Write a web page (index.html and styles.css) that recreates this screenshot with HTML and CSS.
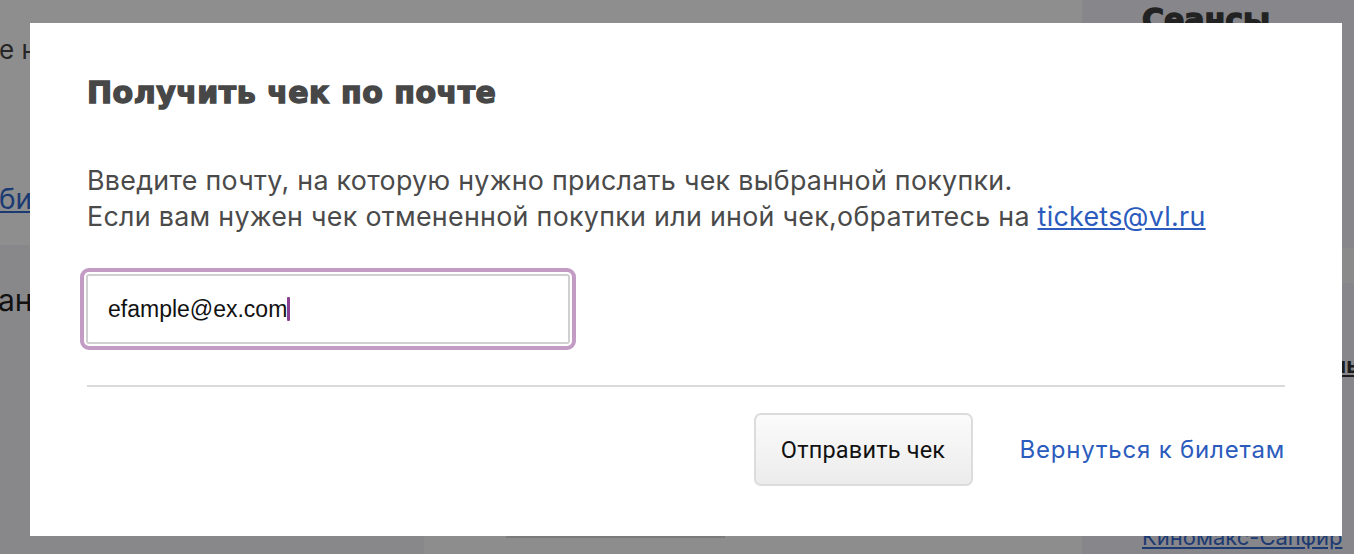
FILE: index.html
```html
<!DOCTYPE html>
<html lang="ru">
<head>
<meta charset="utf-8">
<title>Получить чек по почте</title>
<link rel="stylesheet" href="styles.css">
</head>
<body>
<div class="page">
  <div class="main">
    <div class="main-top">
      <p class="bg-text">е недоступно</p>
      <a class="bg-link" href="#">билеты</a>
    </div>
    <div class="main-bottom">
      <div class="side">
        <p class="bg-big">анонсы</p>
      </div>
      <div class="center">
        <div class="center-bar"></div>
      </div>
    </div>
  </div>
  <aside class="right">
    <h2 class="right-title">Сеансы</h2>
    <div class="right-band"></div>
    <p class="right-mid"><a href="#">Фильмы</a></p>
    <a class="right-link" href="#">Киномакс-Сапфир</a>
  </aside>
</div>

<div class="modal">
  <h1 class="modal-title">Получить чек по почте</h1>
  <p class="modal-text">Введите почту, на которую нужно прислать чек выбранной покупки.<br>Если вам нужен чек отмененной покупки или иной чек,обратитесь на <a href="#" class="mail">tickets@vl.ru</a></p>
  <div class="field">
    <div class="field-inner"><span class="field-value">efample@ex.com</span><span class="caret"></span></div>
  </div>
  <div class="divider"></div>
  <div class="actions">
    <button class="btn" type="button">Отправить чек</button>
    <a class="back" href="#">Вернуться к билетам</a>
  </div>
</div>
</body>
</html>
```

FILE: styles.css
```css
html, body {
  margin: 0;
  padding: 0;
}
body {
  width: 1354px;
  height: 554px;
  overflow: hidden;
  background: #8e8e8e;
  font-family: "Inter", "Liberation Sans", sans-serif;
  position: relative;
}
.page {
  display: flex;
  width: 1354px;
  height: 554px;
}
.main {
  width: 1082px;
  display: flex;
  flex-direction: column;
}
.main-top {
  height: 245px;
  background: #8e8e8e;
  overflow: hidden;
}
.bg-text {
  margin: 34px 0 0 -1px;
  font-size: 26px;
  line-height: 32px;
  color: #262626;
  white-space: nowrap;
}
.bg-link {
  display: block;
  margin: 116px 0 0 -1px;
  font-size: 28px;
  line-height: 34px;
  color: #1b3a73;
}
.main-bottom {
  flex: 1;
  display: flex;
}
.side {
  width: 424px;
  background: #88888b;
  overflow: hidden;
}
.bg-big {
  margin: 37px 0 0 -2px;
  font-size: 30px;
  line-height: 36px;
  color: #111;
}
.center {
  flex: 1;
  background: #8d8d8d;
}
.center-bar {
  margin: 291px 0 0 82px;
  width: 219px;
  height: 2px;
  background: #7b7b7b;
}
.right {
  flex: 1;
  display: flex;
  flex-direction: column;
  align-items: flex-start;
  background: #87878b;
  padding-left: 60px;
  overflow: hidden;
}
.right-title {
  margin: 2px 0 0;
  font-family: "DejaVu Sans", sans-serif;
  font-weight: 700;
  font-size: 30px;
  line-height: 35px;
  -webkit-text-stroke: 1.4px #222;
  color: #222;
}
.right-band {
  align-self: stretch;
  margin: 211px 0 0 -60px;
  height: 35px;
  background: #8b8b8b;
}
.right-mid {
  margin: 69px 0 0 0;
  font-size: 22px;
  line-height: 27px;
  font-weight: 700;
  padding-left: 128px;
  white-space: nowrap;
}
.right-mid a { color: #1c1c1c; }
.right-link {
  display: block;
  margin-top: 145px;
  font-size: 22px;
  line-height: 27px;
  color: #1b3a73;
  white-space: nowrap;
}

/* modal */
.modal {
  position: absolute;
  left: 30px;
  top: 23px;
  width: 1312px;
  height: 513px;
  box-sizing: border-box;
  background: #fff;
  padding: 52px 57px 0 57px;
}
.modal-title {
  margin: 0;
  font-family: "DejaVu Sans", sans-serif;
  font-weight: 700;
  font-size: 30px;
  line-height: 36px;
  letter-spacing: 0.5px;
  -webkit-text-stroke: 1.4px #474747;
  color: #474747;
}
.modal-text {
  margin: 51px 0 0;
  font-size: 26.8px;
  line-height: 36px;
  letter-spacing: 0.3px;
  color: #4a4a4a;
}
.mail {
  color: #2b5bbd;
}
.field {
  margin-top: 34px;
  margin-left: -7px;
  width: 496px;
  height: 82px;
  box-sizing: border-box;
  border: 4px solid #c29cc5;
  border-radius: 9px;
  padding: 2px;
  background: #fff;
}
.field-inner {
  box-sizing: border-box;
  height: 100%;
  border: 2px solid #d0d0d0;
  border-radius: 3px;
  display: flex;
  align-items: center;
  padding-left: 20px;
}
.field-value {
  font-family: "Liberation Sans", sans-serif;
  font-size: 23px;
  color: #111;
}
.caret {
  display: inline-block;
  width: 3px;
  height: 24px;
  background: #8a3f92;
  border-radius: 1px;
}
.divider {
  margin-top: 35px;
  height: 2px;
  background: #dadada;
}
.actions {
  margin-top: 26px;
  display: flex;
  align-items: center;
  justify-content: flex-end;
  gap: 47px;
}
.btn {
  width: 219px;
  height: 73px;
  box-sizing: border-box;
  border: 2px solid #dcdcdc;
  border-radius: 7px;
  background: linear-gradient(#fbfbfb, #ececec);
  font-family: "Roboto", sans-serif;
  font-size: 23.5px;
  letter-spacing: 0.2px;
  color: #111;
  padding: 0;
}
.back {
  font-size: 24px;
  letter-spacing: 0.8px;
  color: #2b5bbd;
  text-decoration: none;
}
```
